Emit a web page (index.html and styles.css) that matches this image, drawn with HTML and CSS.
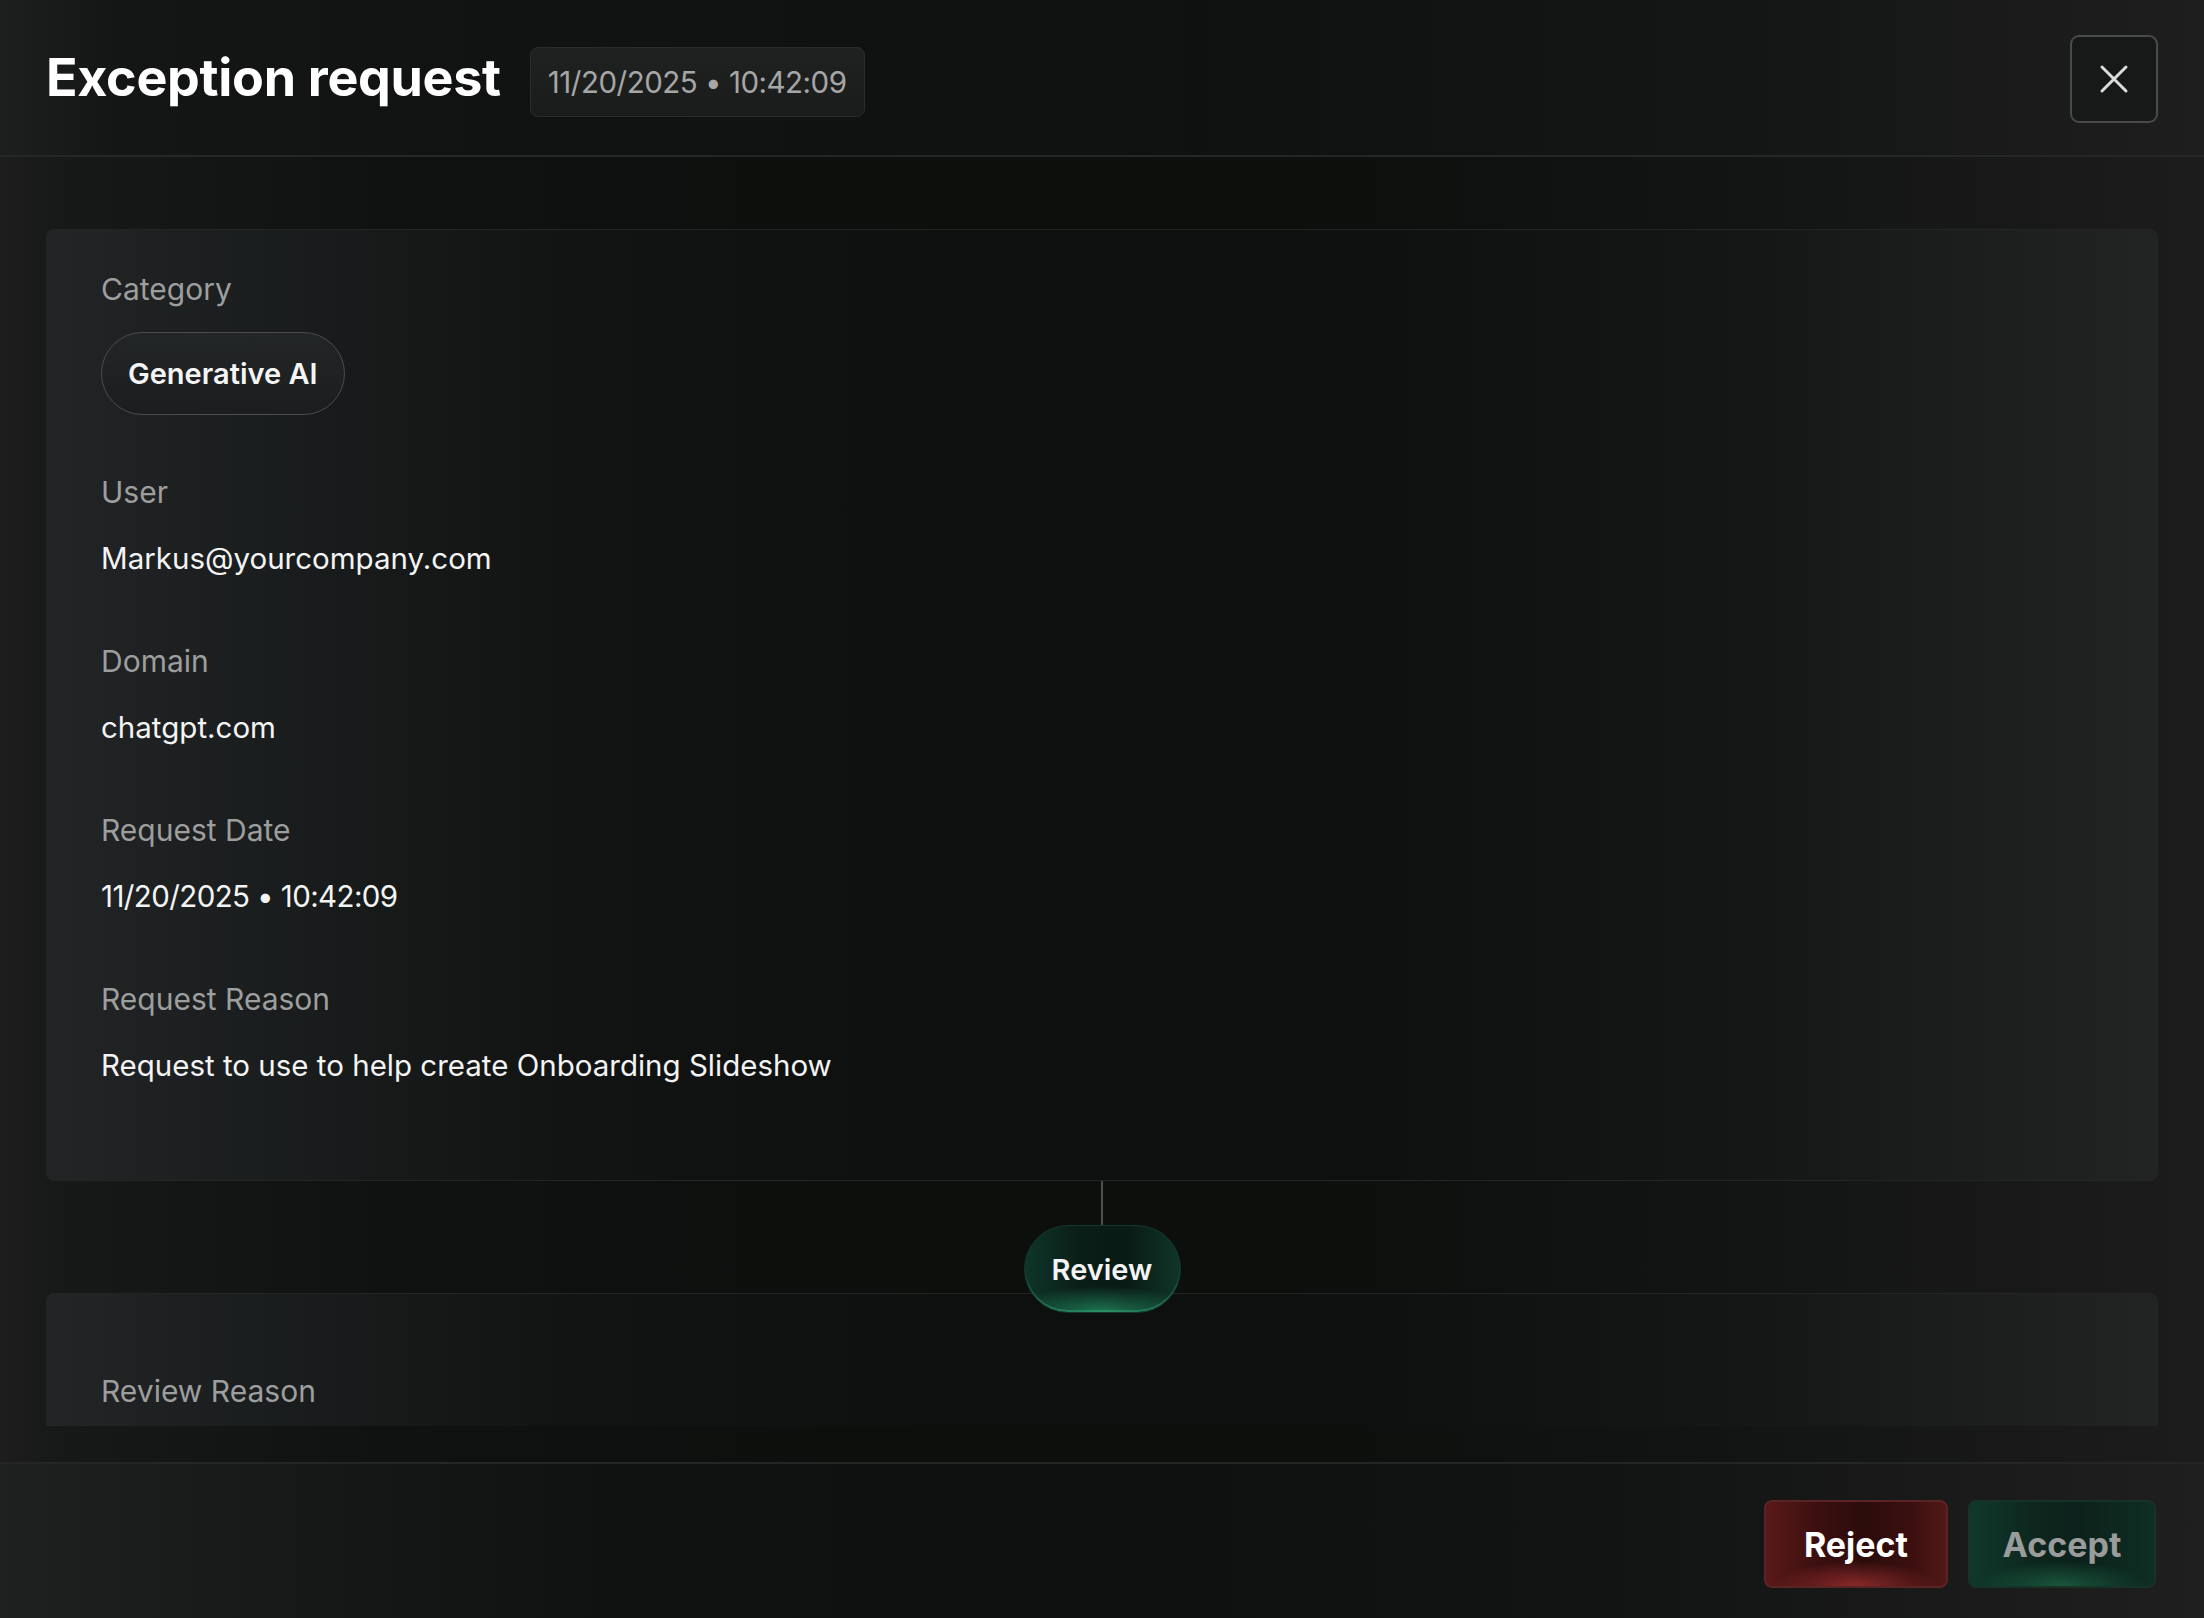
FILE: index.html
```html
<!DOCTYPE html>
<html lang="en">
<head>
<meta charset="utf-8">
<title>Exception request</title>
<link rel="stylesheet" href="styles.css">
</head>
<body>
<div class="modal">
  <header class="header">
    <div class="header-left">
      <h1 class="title">Exception request</h1>
      <span class="stamp">11/20/2025 • 10:42:09</span>
    </div>
    <button class="close" aria-label="Close">
      <svg width="30" height="30" viewBox="0 0 30 30" fill="none" stroke="#dcdcdc" stroke-width="3" stroke-linecap="round">
        <path d="M3 3 L27 27 M27 3 L3 27"/>
      </svg>
    </button>
  </header>

  <main class="body">
    <div class="scroll">
      <section class="card card--details">
        <div class="field field--tag">
          <div class="label">Category</div>
          <span class="tag">Generative AI</span>
        </div>
        <div class="field">
          <div class="label">User</div>
          <div class="value">Markus@yourcompany.com</div>
        </div>
        <div class="field">
          <div class="label">Domain</div>
          <div class="value">chatgpt.com</div>
        </div>
        <div class="field">
          <div class="label">Request Date</div>
          <div class="value value--num">11/20/2025 • 10:42:09</div>
        </div>
        <div class="field field--last">
          <div class="label">Request Reason</div>
          <div class="value">Request to use to help create Onboarding Slideshow</div>
        </div>
      </section>

      <div class="step">
        <div class="step-line"></div>
        <div class="step-pill">Review</div>
      </div>

      <section class="card card--review">
        <div class="field">
          <div class="label">Review Reason</div>
        </div>
      </section>
    </div>
  </main>

  <footer class="footer">
    <button class="btn btn--reject">Reject</button>
    <button class="btn btn--accept">Accept</button>
  </footer>
</div>
</body>
</html>
```

FILE: styles.css
```css
* { box-sizing: border-box; }

html, body {
  margin: 0;
  padding: 0;
  width: 2204px;
  height: 1618px;
  overflow: hidden;
  background: #0d0f0d;
}

body {
  font-family: "Inter", "Noto Sans", sans-serif;
  color: #f2f2f2;
}

.modal {
  width: 2204px;
  height: 1618px;
  display: flex;
  flex-direction: column;
  background: linear-gradient(90deg, #1c1d1c 0px, #171918 60px, #101211 380px, #0d0f0d 900px, #0d0f0d 1300px, #121413 1700px, #1b1c1b 2204px);
}

/* Header */
.header {
  height: 157px;
  flex: none;
  display: flex;
  align-items: center;
  justify-content: space-between;
  padding: 0 46px;
  border-bottom: 2px solid #252726;
  background: linear-gradient(90deg, #1d1f1e 0px, #141615 120px, #111312 500px, #0f1110 1200px, #151716 1800px, #1d1e1d 2204px);
}

.header-left {
  display: flex;
  align-items: center;
  gap: 29px;
}

.title {
  margin: 0;
  font-size: 52px;
  font-weight: 700;
  letter-spacing: -0.3px;
  line-height: 63px;
  color: #ffffff;
}

.stamp {
  margin-top: 9px;
  height: 70px;
  display: inline-flex;
  align-items: center;
  padding: 0 17px;
  font-size: 29.5px;
  color: #a6a6a6;
  border: 1px solid #2b2d2d;
  border-radius: 8px;
  background: linear-gradient(180deg, #202222 0%, #1a1c1c 100%);
  letter-spacing: -0.5px;
}

.close {
  width: 88px;
  height: 88px;
  margin-top: 2px;
  display: flex;
  align-items: center;
  justify-content: center;
  background: #171918;
  border: 2px solid #484a4b;
  border-radius: 9px;
  padding: 0;
}

/* Body */
.body {
  flex: 1;
  min-height: 0;
  display: flex;
  flex-direction: column;
  padding: 72px 46px 36px;
}

.scroll {
  flex: 1;
  min-height: 0;
  overflow: hidden;
  display: flex;
  flex-direction: column;
}

.card {
  flex: none;
  border: 1px solid #242626;
  border-radius: 8px;
  padding: 0 54px;
  background: linear-gradient(90deg, #222426 0px, #1b1e1e 200px, #121414 520px, #0e100f 900px, #0e100f 1300px, #151717 1700px, #222424 2112px);
}

.card--details {
  padding-top: 41px;
  padding-bottom: 97px;
}

.card--review {
  margin-top: -20px;
  padding-top: 79px;
  padding-bottom: 60px;
}

.field {
  display: flex;
  flex-direction: column;
  align-items: flex-start;
  padding-bottom: 67px;
}

.field--tag { padding-bottom: 59px; }
.field--last { padding-bottom: 0; }

.label {
  font-size: 30px;
  line-height: 36px;
  color: #9d9e9e;
  margin-bottom: 30px;
}

.field--tag .label { margin-bottom: 25px; }

.value {
  font-size: 29.5px;
  line-height: 36px;
  color: #f4f4f4;
}

.value--num { letter-spacing: -0.6px; }

.tag {
  height: 83px;
  display: inline-flex;
  align-items: center;
  padding: 0 26px;
  font-size: 29px;
  font-weight: 600;
  color: #f5f5f5;
  border: 1.5px solid #4a4c4d;
  border-radius: 42px;
  background: linear-gradient(180deg, #232627 0%, #1b1d1e 100%);
}

/* Review step */
.step {
  flex: none;
  display: flex;
  flex-direction: column;
  align-items: center;
}

.step-line {
  width: 2px;
  height: 44px;
  background: #4d4f4f;
}

.step-pill {
  position: relative;
  z-index: 1;
  height: 88px;
  width: 157px;
  display: flex;
  align-items: center;
  justify-content: center;
  font-size: 29px;
  font-weight: 600;
  color: #f4f4f4;
  border-radius: 44px;
  border: 1px solid #14382c;
  background:
    radial-gradient(ellipse 60% 30% at 50% 100%, rgba(46, 190, 130, 0.55) 0%, rgba(46, 190, 130, 0) 100%),
    linear-gradient(90deg, #0f3529 0%, #0a1e18 35%, #0a1a15 65%, #0f3529 100%);
  box-shadow: inset 0 -2px 0 rgba(60, 200, 140, 0.35);
}

/* Footer */
.footer {
  height: 156px;
  flex: none;
  display: flex;
  align-items: center;
  justify-content: flex-end;
  gap: 20px;
  padding: 0 48px 0 46px;
  border-top: 2px solid #242625;
  background: linear-gradient(90deg, #1f2120 0px, #191b1a 200px, #101211 600px, #0e100f 1100px, #121413 1600px, #1e1f1e 2204px);
}

.btn {
  height: 88px;
  margin-top: 6px;
  font-family: "Inter", "Noto Sans", sans-serif;
  font-size: 34px;
  font-weight: 700;
  border-radius: 8px;
  padding: 0;
  display: flex;
  align-items: center;
  justify-content: center;
}

.btn--reject {
  width: 184px;
  color: #ffffff;
  border: 2px solid #5a2424;
  background:
    radial-gradient(ellipse 45% 30% at 50% 100%, rgba(200, 60, 60, 0.6) 0%, rgba(200, 60, 60, 0) 100%),
    linear-gradient(90deg, #5a1919 0%, #3a0f0f 30%, #2c0c0c 55%, #3a0f0f 80%, #531818 100%);
}

.btn--accept {
  width: 188px;
  color: #9a9c9b;
  border: 2px solid #173328;
  background:
    radial-gradient(ellipse 45% 30% at 50% 100%, rgba(40, 150, 100, 0.45) 0%, rgba(40, 150, 100, 0) 100%),
    linear-gradient(90deg, #10392b 0%, #0d261e 35%, #0c211b 60%, #0f2e24 100%);
}
```
